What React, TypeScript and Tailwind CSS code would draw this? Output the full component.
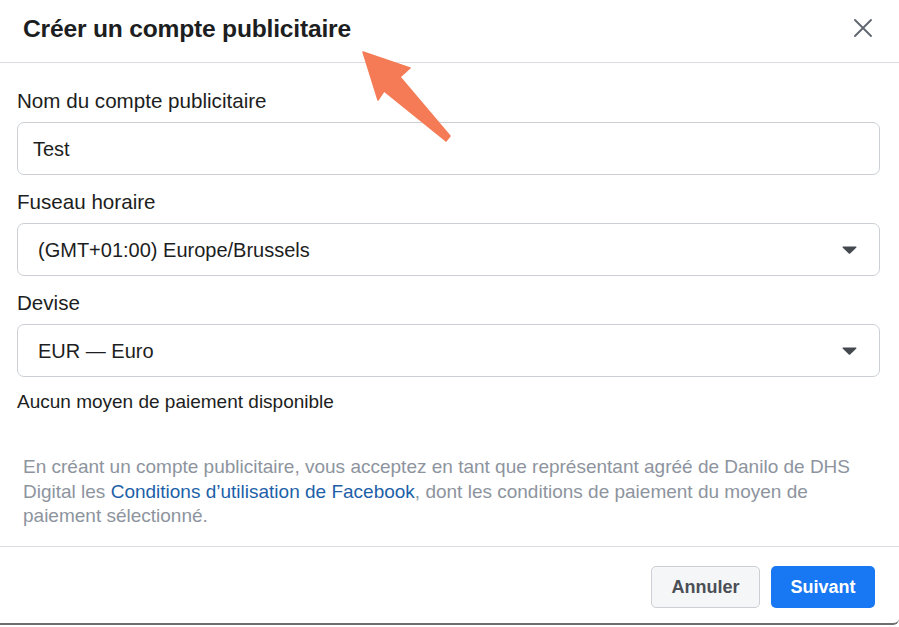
const Field = ({ label, children }: { label: string; children: React.ReactNode }) => (
  <div>
    <div className="text-[20.6px] leading-[24px] text-[#1c1e21]">{label}</div>
    {children}
  </div>
);

const SelectBox = ({ value }: { value: string }) => (
  <div className="mt-[9px] flex h-[53px] items-center justify-between rounded-[7px] border border-[#ccd0d5] bg-white pl-[20px] pr-[22px]">
    <span className="text-[20px] text-[#1c1e21]">{value}</span>
    <svg width="15" height="8" viewBox="0 0 15 8">
      <path d="M1 0.5 H14 a0.6 0.6 0 0 1 0.4 1 L8.2 7.4 a1 1 0 0 1 -1.4 0 L0.6 1.5 A0.6 0.6 0 0 1 1 0.5Z" fill="#444950" />
    </svg>
  </div>
);

export default function App() {
  return (
    <div
      className="relative h-[627px] w-[899px] overflow-hidden bg-white"
      style={{ fontFamily: '"Liberation Sans", Arial, sans-serif' }}
    >
      <div className="flex h-[625px] flex-col border-b-2 border-[#6e6e6e] rounded-br-[6px]">
        {/* Header */}
        <div className="flex h-[63px] items-center justify-between border-b border-[#dadde1] pl-[23px] pr-[26px]">
          <h1 className="-mt-[4px] text-[24.6px] font-bold tracking-[-0.2px] text-[#1c1e21]">
            Créer un compte publicitaire
          </h1>
          <svg width="20" height="20" viewBox="0 0 20 20" className="-mt-[6px]">
            <path d="M2 2 L18 18 M18 2 L2 18" stroke="#606770" strokeWidth="1.9" strokeLinecap="round" />
          </svg>
        </div>

        {/* Body */}
        <div className="flex flex-col pl-[17px] pr-[19px] pt-[26px]">
          <Field label="Nom du compte publicitaire">
            <div className="mt-[9px] flex h-[53px] items-center rounded-[7px] border border-[#ccd0d5] bg-white px-[15px]">
              <span className="text-[20px] text-[#1c1e21]">Test</span>
            </div>
          </Field>
          <div className="mt-[15px]">
            <Field label="Fuseau horaire">
              <SelectBox value="(GMT+01:00) Europe/Brussels" />
            </Field>
          </div>
          <div className="mt-[15px]">
            <Field label="Devise">
              <SelectBox value="EUR — Euro" />
            </Field>
          </div>
          <div className="mt-[13px] text-[19px] leading-[24px] text-[#1c1e21]">
            Aucun moyen de paiement disponible
          </div>
          <p className="mt-[41px] pl-[6px] text-[19px] leading-[24.5px] text-[#8d949e]">
            En créant un compte publicitaire, vous acceptez en tant que représentant agréé de Danilo de DHS
            <br />
            Digital les <span className="text-[#1d5fa8]">Conditions d’utilisation de Facebook</span>, dont les conditions de paiement du moyen de
            <br />
            paiement sélectionné.
          </p>
        </div>

        {/* Footer */}
        <div className="mt-auto flex h-[77px] items-start justify-end gap-[11px] border-t border-[#dadde1] pr-[24px] pt-[19px]">
          <button className="h-[42px] w-[109px] rounded-[5px] border border-[#ccd0d5] bg-[#f5f6f7] text-[18px] font-bold text-[#4b4f56]">
            Annuler
          </button>
          <button className="h-[42px] w-[104px] rounded-[5px] bg-[#1877f2] text-[18px] font-bold text-white">
            Suivant
          </button>
        </div>
      </div>

      {/* Annotation arrow */}
      <svg className="pointer-events-none absolute left-0 top-0" width="899" height="627">
        <polygon
          points="363,52 410,68 400,77 450,136 446,141 384,91 378,100"
          fill="#f47b56"
          strokeLinejoin="round"
          stroke="#f47b56"
          strokeWidth="1.5"
        />
      </svg>
    </div>
  );
}
